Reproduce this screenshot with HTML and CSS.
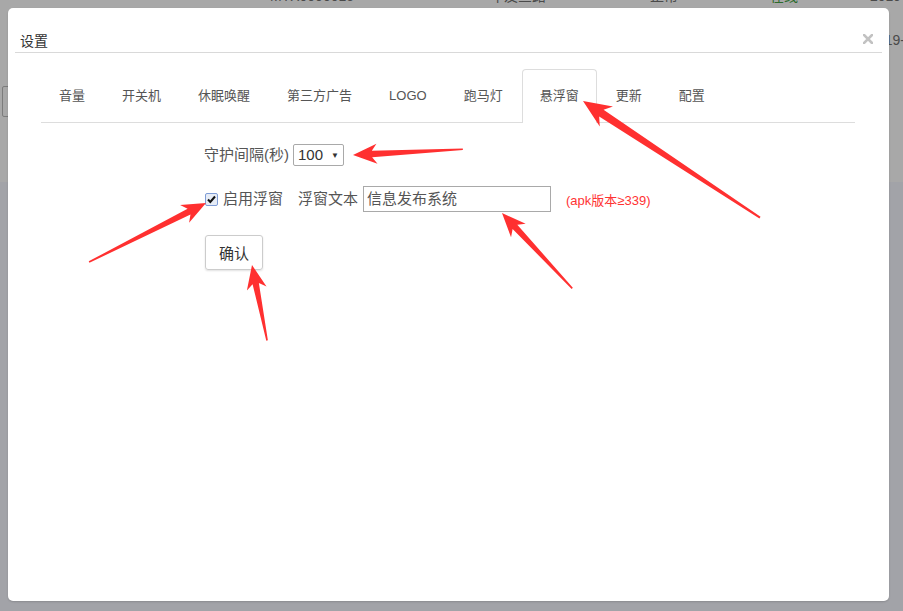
FILE: index.html
```html
<!DOCTYPE html>
<html lang="zh">
<head>
<meta charset="utf-8">
<title>设置</title>
<link rel="stylesheet" href="styles.css">
</head>
<body>
<div class="backdrop">
  <div class="bd-top">
    <div class="bd-row">
      <span class="c1">某部省局测试</span>
      <span class="c2">MTX0000015</span>
      <span class="c3">车友三路</span>
      <span class="c4">正常</span>
      <span class="c5 green">在线</span>
      <span class="c6">2019</span>
    </div>
    <div class="bd-row2"><span>19-</span></div>
    <div class="bd-box"></div>
  </div>
  <div class="bd-bottom"></div>
</div>

<div class="modal">
  <div class="modal-header">
    <span class="modal-title">设置</span>
    <svg class="close" width="10" height="10" viewBox="0 0 10 10"><path d="M1 1L9 9M9 1L1 9" stroke="#c2c2c2" stroke-width="2.6" stroke-linecap="square"/></svg>
  </div>
  <div class="modal-body">
    <ul class="tabs">
      <li class="tab">音量</li>
      <li class="tab">开关机</li>
      <li class="tab">休眠唤醒</li>
      <li class="tab">第三方广告</li>
      <li class="tab latin">LOGO</li>
      <li class="tab">跑马灯</li>
      <li class="tab active">悬浮窗</li>
      <li class="tab">更新</li>
      <li class="tab">配置</li>
    </ul>
    <div class="form">
      <div class="row row1">
        <span class="label">守护间隔(秒)</span>
        <span class="select"><span class="sel-val">100</span><span class="caret">▼</span></span>
      </div>
      <div class="row row2">
        <span class="checkbox"><svg width="11" height="11" viewBox="0 0 11 11"><path d="M2 5.5L4.3 8L9 2.5" fill="none" stroke="#111" stroke-width="2"/></svg></span>
        <span class="label cb-label">启用浮窗</span>
        <span class="label">浮窗文本</span>
        <span class="input">信息发布系统</span>
        <span class="note">(apk版本≥339)</span>
      </div>
      <div class="row row3">
        <span class="btn">确认</span>
      </div>
    </div>
  </div>
</div>

<svg class="arrows" width="903" height="611" viewBox="0 0 903 611">
  <g fill="#ff3030">
    <polygon transform="translate(353 155) rotate(177)" points="0,0 -24,-10 -19,-3.2 -110,-0.8 -110,0.8 -19,3.2 -24,10"/>
    <polygon transform="translate(583 101) rotate(213.4)" points="0,0 -28,-12 -22,-4 -212,-1 -212,1 -22,4 -28,12"/>
    <polygon transform="translate(206 203) rotate(-26.8)" points="0,0 -24,-10 -19,-3.2 -131,-0.8 -131,0.8 -19,3.2 -24,10"/>
    <polygon transform="translate(502 213) rotate(-133)" points="0,0 -24,-10 -19,-3.2 -103,-0.8 -103,0.8 -19,3.2 -24,10"/>
    <polygon transform="translate(252 265) rotate(-101.3)" points="0,0 -24,-10 -19,-3.2 -77,-0.8 -77,0.8 -19,3.2 -24,10"/>
  </g>
</svg>
</body>
</html>
```
FILE: styles.css
```css
* { box-sizing: border-box; }
html, body {
  margin: 0;
  padding: 0;
  width: 903px;
  height: 611px;
  overflow: hidden;
  font-family: "Liberation Sans", "Noto Sans CJK SC", sans-serif;
}
body { position: relative; }

.backdrop {
  display: flex;
  flex-direction: column;
  height: 611px;
}
.bd-top {
  height: 182px;
  background: #a8a8a8;
  overflow: hidden;
  font-size: 14px;
  color: #4a4a4a;
}
.bd-row {
  margin-top: -13px;
  height: 18px;
  line-height: 18px;
  display: grid;
  grid-template-columns: 80px 190px 220px 160px 120px 100px 33px;
  white-space: nowrap;
}
.bd-row .c1 { grid-column: 2; margin-left: -190px; }
.bd-row .c2 { grid-column: 3; }
.bd-row .c3 { grid-column: 4; }
.bd-row .c4 { grid-column: 5; }
.bd-row .c5 { grid-column: 6; }
.bd-row .c6 { grid-column: 7; }
.green { color: #2c6b2c; }
.bd-row2 {
  margin-top: 26px;
  display: flex;
  justify-content: flex-end;
  line-height: 18px;
  margin-right: -2px;
}
.bd-box {
  margin-top: 37px;
  margin-left: 2px;
  width: 40px;
  height: 31px;
  border: 1px solid #7c7c7c;
  border-radius: 2px;
}
.bd-bottom {
  flex: 1;
  background: #a2a3a8;
}

.modal {
  position: absolute;
  left: 8px;
  top: 8px;
  width: 881px;
  height: 593px;
  background: #fff;
  border-radius: 5px;
  box-shadow: 0 1px 2px rgba(0,0,0,0.15);
}
.modal-header {
  margin: 0 7px;
  padding: 25px 2px 3px 5px;
  border-bottom: 1px solid #d9d9d9;
  display: flex;
  align-items: center;
  justify-content: space-between;
  line-height: 16px;
}
.modal-title {
  font-size: 14px;
  color: #333;
}
.close { margin-right: 7px; margin-top: -4px; }

.modal-body { padding: 0 34px 0 33px; }
.tabs {
  list-style: none;
  margin: 16px 0 0;
  padding: 0;
  display: flex;
  border-bottom: 1px solid #dddddd;
}
.tab {
  font-size: 13px;
  color: #555;
  height: 53px;
  line-height: 52px;
  padding: 0 17px;
  margin-right: 1px;
  margin-bottom: -1px;
  border: 1px solid transparent;
  border-bottom: none;
  white-space: nowrap;
}
.tab.active {
  background: #fff;
  border-color: #dddddd;
  border-radius: 4px 4px 0 0;
  height: 54px;
}

.form {
  padding-left: 163px;
  font-size: 15px;
  color: #555;
}
.row { display: flex; align-items: center; }
.row1 { margin-top: 21px; height: 22px; }
.row2 { margin-top: 20px; height: 26px; }
.row3 { margin-top: 23px; }
.label { line-height: 20px; white-space: nowrap; }
.select {
  margin-left: 4px;
  width: 51px;
  height: 22px;
  border: 1px solid #a9a9a9;
  border-radius: 2px;
  display: flex;
  align-items: center;
  padding-left: 4px;
  color: #333;
}
.sel-val { font-size: 15px; line-height: 18px; }
.caret { font-size: 8px; margin-left: 8px; color: #333; }
.checkbox {
  margin-left: 1px;
  width: 13px;
  height: 13px;
  border: 1px solid #7f9cd6;
  background: #e6ecf6;
  border-radius: 2px;
  display: flex;
  align-items: center;
  justify-content: center;
}
.cb-label { margin-left: 5px; margin-right: 15px; }
.input {
  margin-left: 5px;
  width: 188px;
  height: 26px;
  border: 1px solid #a9a9a9;
  padding-left: 3px;
  line-height: 24px;
  color: #555;
}
.note {
  margin-left: 15px;
  font-size: 13px;
  color: #ff3333;
}
.btn {
  margin-left: 1px;
  width: 58px;
  height: 35px;
  border: 1px solid #cccccc;
  border-radius: 3px;
  box-shadow: 0 1px 2px rgba(0,0,0,0.12);
  display: flex;
  align-items: center;
  justify-content: center;
  font-size: 15px;
  color: #333;
}

.arrows {
  position: absolute;
  left: 0;
  top: 0;
  pointer-events: none;
}
```
